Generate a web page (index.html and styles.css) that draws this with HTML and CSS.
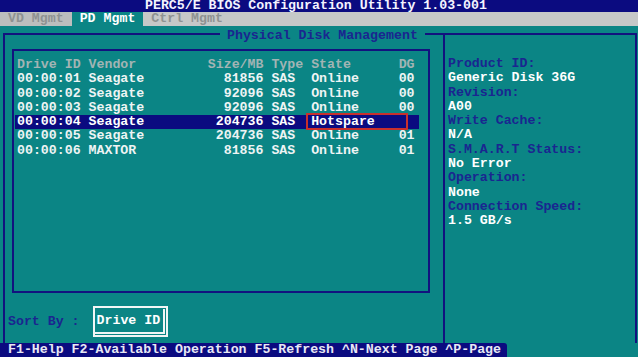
FILE: index.html
```html
<!DOCTYPE html>
<html lang="en">

<head>
    <meta charset="UTF-8">
    <title>PERC5/E BIOS Configuration Utility</title>
    <link rel="stylesheet" href="styles.css">
</head>

<body>
    <div class="titlebar">PERC5/E BIOS Configuration Utility 1.03-001</div>

    <div class="tabs">
        <span class="tab">VD Mgmt</span>
        <span class="tab active">PD Mgmt</span>
        <span class="tab">Ctrl Mgmt</span>
    </div>

    <div class="frame">
        <span class="frame-title">Physical Disk Management</span>

        <div class="pd-panel">
            <div class="disk-box">
                <div class="row head">
                    <span>Drive ID</span>
                    <span>Vendor</span>
                    <span class="size">Size/MB</span>
                    <span>Type</span>
                    <span>State</span>
                    <span>DG</span>
                </div>
                <div class="row">
                    <span>00:00:01</span>
                    <span>Seagate</span>
                    <span class="size">81856</span>
                    <span>SAS</span>
                    <span>Online</span>
                    <span>00</span>
                </div>
                <div class="row">
                    <span>00:00:02</span>
                    <span>Seagate</span>
                    <span class="size">92096</span>
                    <span>SAS</span>
                    <span>Online</span>
                    <span>00</span>
                </div>
                <div class="row">
                    <span>00:00:03</span>
                    <span>Seagate</span>
                    <span class="size">92096</span>
                    <span>SAS</span>
                    <span>Online</span>
                    <span>00</span>
                </div>
                <div class="row selected">
                    <span>00:00:04</span>
                    <span>Seagate</span>
                    <span class="size">204736</span>
                    <span>SAS</span>
                    <span class="marked">Hotspare</span>
                    <span></span>
                </div>
                <div class="row">
                    <span>00:00:05</span>
                    <span>Seagate</span>
                    <span class="size">204736</span>
                    <span>SAS</span>
                    <span>Online</span>
                    <span>01</span>
                </div>
                <div class="row">
                    <span>00:00:06</span>
                    <span>MAXTOR</span>
                    <span class="size">81856</span>
                    <span>SAS</span>
                    <span>Online</span>
                    <span>01</span>
                </div>
            </div>

            <div class="sort-row">
                <span class="label">Sort By :</span>
                <div class="sort-box">
                    <span class="sort-value">Drive ID</span>
                </div>
            </div>
        </div>

        <div class="info-panel">
            <div class="label">Product ID:</div>
            <div class="value">Generic Disk 36G</div>
            <div class="label">Revision:</div>
            <div class="value">A00</div>
            <div class="label">Write Cache:</div>
            <div class="value">N/A</div>
            <div class="label">S.M.A.R.T Status:</div>
            <div class="value">No Error</div>
            <div class="label">Operation:</div>
            <div class="value">None</div>
            <div class="label">Connection Speed:</div>
            <div class="value">1.5 GB/s</div>
        </div>
    </div>

    <div class="statusbar">F1-Help F2-Available Operation F5-Refresh ^N-Next Page ^P-Page</div>
</body>

</html>
```

FILE: styles.css
```css
:root {
    --teal: #0b8585;
    --navy: #12127e;
    --bar-navy: #0b0b80;
    --label: #1a2690;
    --text: #eef4f4;
    --dim: #a2b4b4;
    --gray-bar: #c6c8c8;
}

* {
    margin: 0;
    padding: 0;
    box-sizing: border-box;
}

body {
    width: 638px;
    height: 357px;
    overflow: hidden;
    background: var(--teal);
    color: var(--text);
    font-family: 'Liberation Mono', 'DejaVu Sans Mono', monospace;
    font-size: 13.25px;
    font-weight: bold;
    white-space: nowrap;
}

.titlebar {
    height: 12px;
    line-height: 12px;
    background: var(--bar-navy);
    color: #f4f4ff;
    padding-left: 145px;
    overflow: hidden;
}

.tabs {
    height: 14px;
    line-height: 14px;
    background: var(--gray-bar);
    display: flex;
}

.tab {
    padding: 0 8px;
    color: #8e9292;
}

.tab:first-child {
    background: #bcbebe;
}

.tab.active {
    background: var(--teal);
    color: #ffffff;
}

.frame {
    position: relative;
    height: 310px;
    margin: 7px 1px 0 3px;
    border: 2px solid var(--navy);
    border-bottom: none;
    display: grid;
    grid-template-columns: 438px 1fr;
}

.frame-title {
    position: absolute;
    top: -6px;
    left: 215px;
    padding: 0 7px;
    line-height: 14px;
    background: var(--teal);
    color: var(--label);
}

.disk-box {
    width: 418px;
    height: 244px;
    margin: 14px 0 0 7px;
    padding: 7px 0 0 1px;
    border: 2px solid var(--navy);
}

.row {
    display: grid;
    grid-template-columns: 9ch 15ch 8ch 5ch 11ch 2ch;
    line-height: 14.3px;
    padding-left: 2px;
    margin-right: 9px;
}

.row.head {
    color: var(--dim);
}

.row .size {
    text-align: right;
    padding-right: 1ch;
}

.row.selected {
    background: var(--bar-navy);
    color: #ffffff;
}

.marked {
    position: relative;
}

.marked::after {
    content: '';
    position: absolute;
    left: -5px;
    right: -9px;
    top: -2px;
    bottom: -1px;
    border: 2px solid #c8302c;
}

.sort-row {
    display: flex;
    align-items: center;
    gap: 13px;
    margin-top: 13px;
    padding-left: 3px;
}

.label {
    color: var(--label);
}

.sort-box {
    width: 75px;
    height: 31px;
    border: 2px solid #f2f6f6;
    padding: 1px 1px 1px 0;
    display: flex;
}

.sort-value {
    flex: 1;
    padding: 5px 0 0 2px;
    border-right: 2px solid #f2f6f6;
    border-bottom: 2px solid #f2f6f6;
    color: #ffffff;
    line-height: 14px;
}

.info-panel {
    border-left: 2px solid var(--navy);
    padding: 22px 0 0 3px;
    line-height: 14.3px;
}

.info-panel .value {
    color: #ffffff;
}

.statusbar {
    display: inline-block;
    height: 14px;
    line-height: 14px;
    padding: 0 6px 0 8px;
    background: var(--bar-navy);
    color: #e8e8f4;
    border-top-right-radius: 3px;
    vertical-align: top;
}
```
